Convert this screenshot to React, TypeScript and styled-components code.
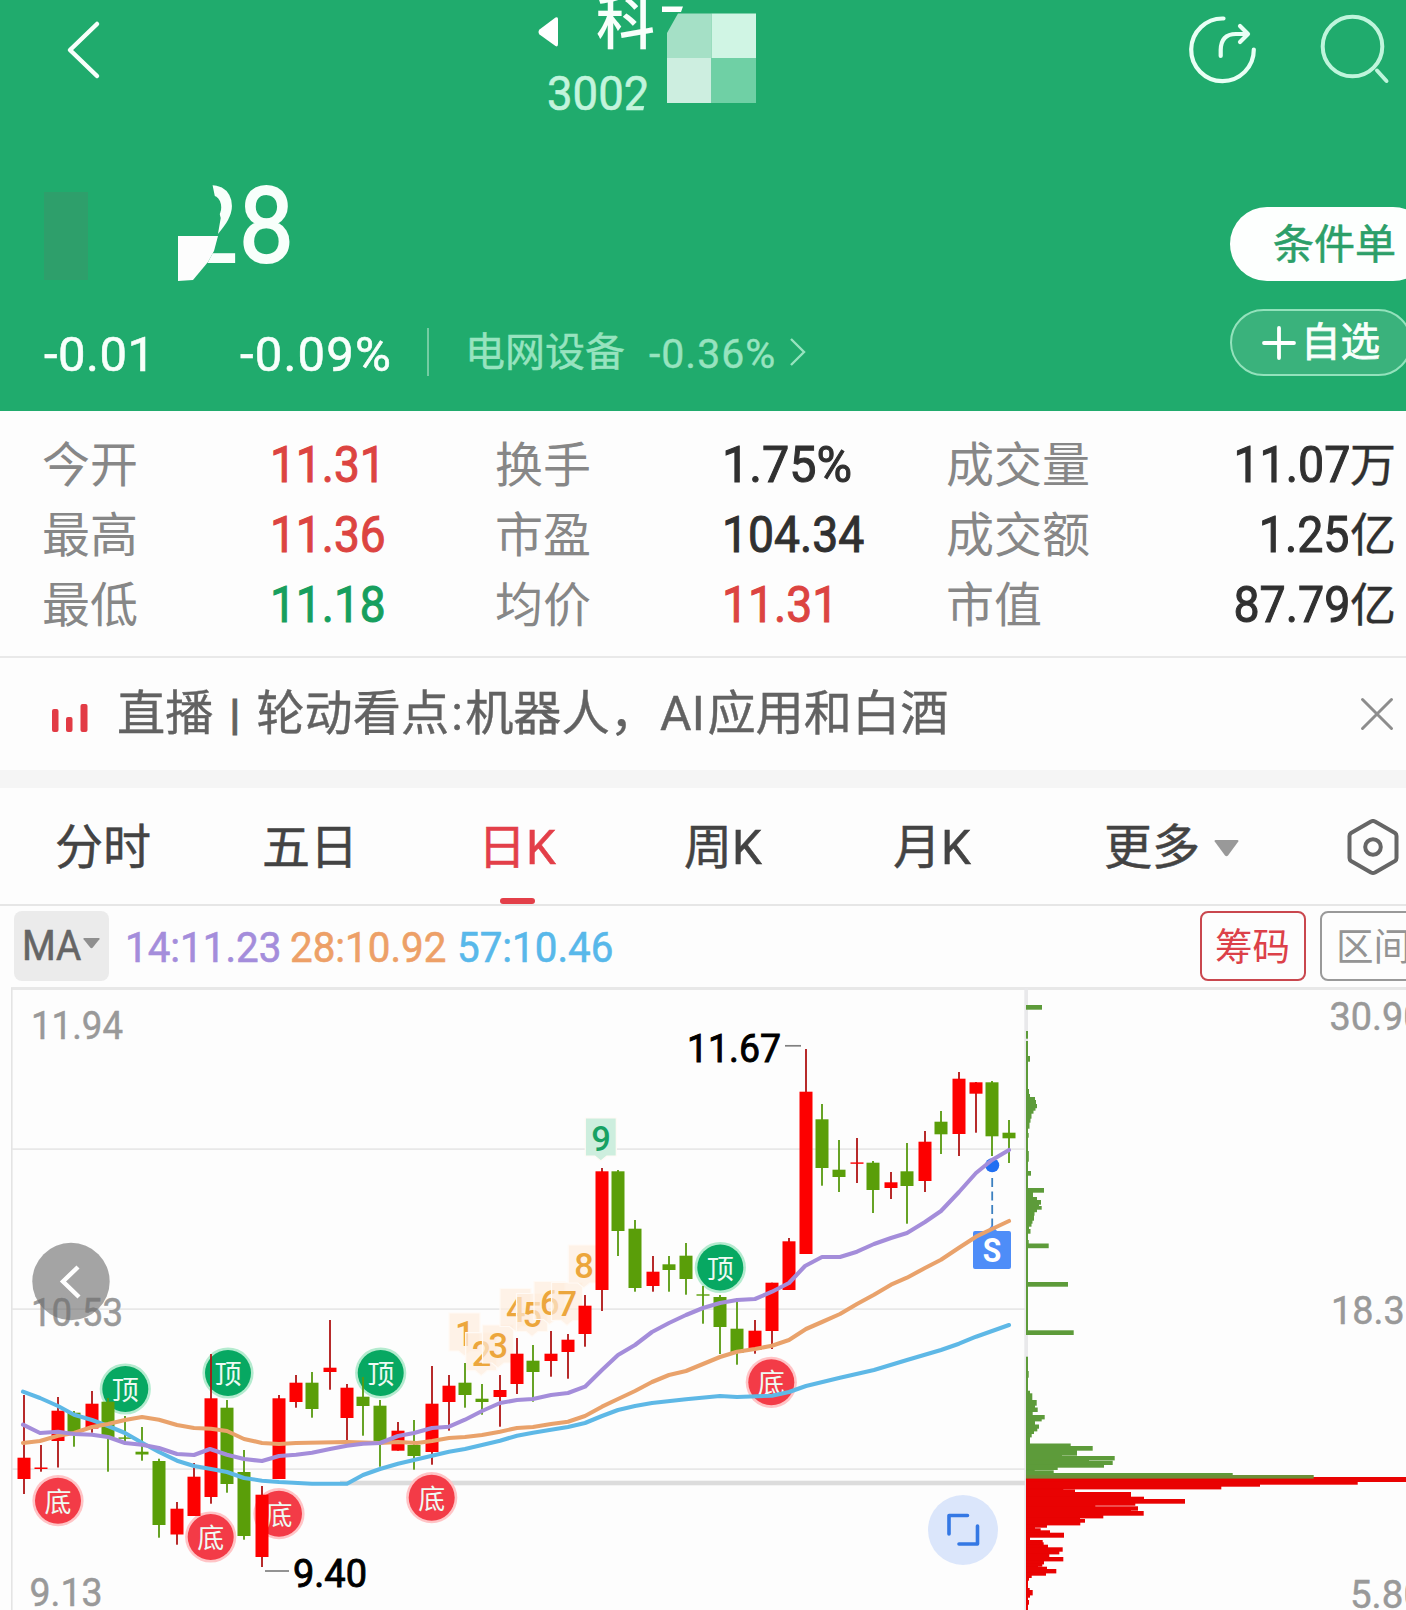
import React from "react";
import styled, { createGlobalStyle } from "styled-components";

const GlobalStyle = createGlobalStyle`
  * { box-sizing: border-box; }
  html, body { margin: 0; padding: 0; }
  body { font-family: Roboto, "Noto Sans CJK SC", sans-serif; background: #fdfdfd; overflow: hidden; }
  svg { display: block; flex: none; }
`;

const Page = styled.main`
  width: 1406px;
  height: 1610px;
  overflow: hidden;
  background: #fdfdfd;
  display: flex;
  flex-direction: column;
`;

const Figures = styled.span<{ $size: number; $stretch?: number; $origin?: string; $color?: string; $spacing?: number; $ink?: number }>`
  display: inline-block;
  font-size: ${(p) => p.$size}px;
  letter-spacing: ${(p) => p.$spacing ?? 0}px;
  color: ${(p) => p.$color ?? "inherit"};
  -webkit-text-stroke: ${(p) => p.$ink ?? 0}px currentColor;
  transform: scaleX(${(p) => p.$stretch ?? 1});
  transform-origin: ${(p) => p.$origin ?? "left"} center;
  white-space: nowrap;
`;

/* ---------- header ---------- */

const Header = styled.header`
  height: 411px;
  flex: none;
  background: #20ab6d;
  color: #f8fffb;
`;

const NavBar = styled.div`
  height: 120px;
  display: grid;
  grid-template-columns: 538px 648px 132px 1fr;
`;

const BackButton = styled.div`
  padding: 20px 0 0 66px;
`;

const TitleBlock = styled.div`
  position: relative;
  display: flex;
  flex-direction: column;
`;

const NameRow = styled.div`
  height: 66px;
  display: flex;
  align-items: flex-start;
`;

const PrevArrow = styled.svg`
  margin-top: 16px;
`;

const StockName = styled.span`
  margin-left: 37px;
  font-size: 59px;
  line-height: 48px;
  font-weight: 500;
`;

const StockCode = styled.div`
  padding-left: 9px;
  line-height: 55px;
  color: #c2f4dc;
`;

const CodeClip = styled.span`
  display: inline-block;
  clip-path: polygon(0 0, 101px 0, 101px 22px, 94px 55px, 0 55px);
`;

const Mosaic = styled.svg`
  position: absolute;
  left: 122px;
  top: 0;
`;

const NavIcon = styled.div`
  padding-top: 12px;
`;

const Quote = styled.div`
  height: 291px;
  display: grid;
  grid-template-columns: 1230px 1fr;
`;

const QuoteLeft = styled.div`
  position: relative;
  padding-top: 52px;
`;

const Price = styled.div`
  height: 108px;
  line-height: 108px;
  padding-left: 183px;
  display: flex;
  -webkit-text-stroke: 2px currentColor;
`;

const PriceDigit = styled.span<{ $cut?: boolean }>`
  display: inline-block;
  width: 56px;
  font-size: 106px;
  transform: scaleX(0.92);
  transform-origin: left center;
  clip-path: ${(p) => (p.$cut ? "polygon(31px 8px, 64px 8px, 64px 94px, 25px 94px, 33px 80px, 38px 62px, 41px 46px, 35px 26px)" : "none")};
`;

const Smudges = styled.svg`
  position: absolute;
  left: 0;
  top: 60px;
`;

const ChangeRow = styled.div`
  margin-top: 48px;
  height: 48px;
  line-height: 53px;
  display: grid;
  grid-template-columns: 196px 188px 38px 183px 140px auto;
  padding-left: 44px;
`;

const ChangeDivider = styled.i`
  width: 2px;
  height: 48px;
  margin-left: -1px;
  background: #74cca3;
`;

const Sector = styled.span`
  margin-left: -1px;
  font-size: 40px;
  line-height: 50px;
  color: #97e3bf;
  -webkit-text-stroke: 0.4px currentColor;
`;

const Actions = styled.div`
  display: flex;
  flex-direction: column;
  gap: 28px;
  padding-top: 87px;
`;

const OrderButton = styled.div`
  width: 200px;
  height: 74px;
  border-radius: 37px;
  background: #fdfffe;
  color: #2c9f69;
  font-size: 41px;
  line-height: 77px;
  padding-left: 43px;
  white-space: nowrap;
  -webkit-text-stroke: 0.6px currentColor;
`;

const WatchButton = styled.div`
  width: 182px;
  height: 67px;
  border-radius: 34px;
  border: 2px solid #93e2bc;
  background: #3ab27c;
  display: flex;
  align-items: center;
  gap: 5px;
  padding-left: 30px;
  font-size: 39.5px;
  line-height: 66px;
  -webkit-text-stroke: 0.8px currentColor;
  white-space: nowrap;
`;

/* ---------- stats ---------- */

const Stats = styled.section`
  height: 247px;
  flex: none;
  padding: 18px 10px 0 43px;
  display: grid;
  grid-template-columns: 227px 226px 226px 225px 1fr;
  grid-template-rows: repeat(3, 70px);
  border-bottom: 2px solid #e9e9e9;
  line-height: 73px;
`;

const StatLabel = styled.span`
  font-size: 48px;
  line-height: 73px;
  margin-left: -1px;
  color: #878787;
  white-space: nowrap;
`;

const StatPair = styled.div`
  display: flex;
  justify-content: space-between;
`;

const StatValue = styled.span<{ $tone?: "up" | "down"; $end?: boolean }>`
  display: flex;
  justify-content: ${(p) => (p.$end ? "flex-end" : "flex-start")};
  color: ${(p) => (p.$tone === "up" ? "#dc4441" : p.$tone === "down" ? "#179f5e" : "#303030")};
`;

const Unit = styled.span`
  font-size: 46px;
  line-height: 73px;
  -webkit-text-stroke: 0.4px currentColor;
`;

/* ---------- live strip ---------- */

const LiveStrip = styled.section`
  height: 112px;
  flex: none;
  display: flex;
  align-items: center;
  padding: 0 12px 0 52px;
`;

const LiveBars = styled.svg`
  margin-top: 8px;
`;

const LiveText = styled.span`
  margin-left: 28px;
  flex: 1;
  font-size: 48.200px;
  line-height: 116px;
  color: #626262;
  white-space: nowrap;
  -webkit-text-stroke: 0.4px currentColor;
`;

const Pipe = styled.span`
  display: inline-block;
  width: 43px;
  text-align: center;
  font-size: 42px;
  font-weight: 700;
  line-height: 40px;
  vertical-align: 1px;
  -webkit-text-stroke: 1px currentColor;
`;

const Colon = styled.span`
  display: inline-block;
  width: 16px;
  text-align: center;
`;

const Ai = styled.span`
  margin-left: 2px;
  margin-right: 2px;
  letter-spacing: 0.5px;
`;

const Band = styled.div`
  height: 18px;
  flex: none;
  background: #f5f5f5;
`;

/* ---------- tabs ---------- */

const Tabs = styled.nav`
  height: 118px;
  flex: none;
  border-bottom: 2px solid #e6e6e6;
  display: grid;
  grid-template-columns: 207px 216px 206px 209px 211px 242px 1fr;
  grid-template-rows: 116px;
  padding-left: 55px;
  color: #434343;
  font-size: 48px;
  line-height: 116px;
  -webkit-text-stroke: 0.5px currentColor;
`;

const Tab = styled.div<{ $active?: boolean }>`
  display: flex;
  align-items: center;
  padding-top: 3px;
  color: ${(p) => (p.$active ? "#e33f49" : "inherit")};
  position: relative;
  white-space: nowrap;
  &::after {
    content: "";
    display: ${(p) => (p.$active ? "block" : "none")};
    position: absolute;
    left: 22px;
    bottom: 0;
    width: 35px;
    height: 6px;
    border-radius: 3px;
    background: #e33f49;
  }
`;

const Latin = styled.span`
  display: inline-block;
  font-size: 49px;
  transform: scaleX(0.97);
  transform-origin: left center;
`;

const Caret = styled.svg`
  margin-left: 14px;
  margin-top: 2px;
`;

/* ---------- indicator bar ---------- */

const IndicatorBar = styled.div`
  height: 81px;
  flex: none;
  padding: 5px 0 6px 14px;
  display: grid;
  grid-template-columns: 111px 165px 167px 743px 120px 1fr;
  font-size: 42px;
  line-height: 74px;
`;

const MaButton = styled.div`
  width: 95px;
  height: 70px;
  border-radius: 8px;
  background: #ebebeb;
  color: #656565;
  display: flex;
  align-items: center;
  padding-left: 8px;
`;

const MaName = styled.span`
  width: 61px;
`;

const Chip = styled.div<{ $tone: string; $line: string; $width: number; $pad: number }>`
  width: ${(p) => p.$width}px;
  height: 70px;
  border: 2px solid ${(p) => p.$line};
  border-radius: 8px;
  color: ${(p) => p.$tone};
  padding-left: ${(p) => p.$pad}px;
  font-size: 37.5px;
  line-height: 69px;
  white-space: nowrap;
`;

const ChartSvg = styled.svg`
  font-family: Roboto, "Noto Sans CJK SC", sans-serif;
`;

/* ---------- chart data ---------- */

type Candle = [number, number, number, number, number, 0 | 1];

// x, high, body top, body bottom, low, rising
const candles: Candle[] = [
  [24, 1395, 1457.7, 1479, 1494, 1], [41, 1445, 1467.5, 1469, 1471.7, 1], [58, 1397, 1410.7, 1441, 1467.5, 1],
  [74, 1411, 1412.7, 1432, 1446.7, 0], [92, 1391, 1403.7, 1428.5, 1432.7, 1], [108, 1398, 1401.7, 1437, 1471.7, 0],
  [125, 1416, 1437.4, 1438.8, 1443, 0], [142, 1427, 1451.7, 1454.5, 1460.7, 0], [159, 1458.7, 1461, 1525, 1537.7, 0],
  [177, 1502, 1508.7, 1534.5, 1544.7, 1], [194, 1463, 1476.7, 1516, 1516, 1], [211, 1354, 1398.3, 1497, 1503.7, 1],
  [227, 1400, 1407.7, 1484, 1492.7, 0], [244, 1450, 1472, 1536, 1539.7, 0], [262, 1486, 1494.7, 1557, 1567, 1],
  [279, 1395, 1398.3, 1479, 1479, 1], [296, 1375, 1382.7, 1402, 1407.7, 1], [312, 1372, 1382.7, 1409, 1417.7, 0],
  [330, 1320, 1367.7, 1372, 1389.7, 1], [347, 1384, 1387.7, 1418, 1440, 1], [363, 1377, 1396.7, 1406, 1435.7, 0],
  [380, 1400, 1405.7, 1442, 1466.7, 0], [398, 1422, 1430.7, 1450.7, 1450.7, 1], [414, 1420, 1445, 1456, 1469.7, 0],
  [432, 1366, 1403.7, 1452, 1464.7, 1], [449, 1375, 1385.7, 1402, 1430.7, 1], [465, 1363, 1382.7, 1395, 1407.7, 0],
  [482, 1384, 1398.7, 1402, 1414.7, 0], [500, 1375, 1390, 1397, 1426.7, 1], [517, 1338, 1353.7, 1384, 1394, 1],
  [533, 1345, 1360.7, 1372, 1401.7, 0], [551, 1331, 1353.7, 1361, 1376.7, 1], [568, 1334, 1339.7, 1352, 1378.7, 1],
  [585, 1295, 1305.7, 1334, 1346.7, 1], [602, 1168, 1171.3, 1290, 1311, 1], [618, 1170, 1171.3, 1231, 1256, 0],
  [635, 1220, 1228.7, 1288, 1291.7, 0], [653, 1256, 1271.7, 1286, 1291.7, 1], [669, 1256, 1264.3, 1270, 1291.7, 0],
  [686, 1243, 1255.7, 1279, 1294.7, 0], [703, 1286, 1294.3, 1295.7, 1323.7, 0], [720, 1295, 1297, 1327, 1354, 0],
  [737, 1302, 1328.7, 1353, 1364.7, 0], [755, 1320, 1330.7, 1350, 1353.7, 1], [772, 1282.7, 1282.7, 1331, 1349, 1],
  [789, 1238, 1241.3, 1290, 1290, 1], [806, 1049, 1091.7, 1254, 1254, 1], [822, 1104, 1119.3, 1168, 1185.7, 0],
  [839, 1140, 1169.7, 1177, 1192, 0], [857, 1138, 1162.4, 1163.8, 1183, 1], [873, 1161, 1162.7, 1190, 1213, 0],
  [891, 1172, 1182.3, 1188, 1199, 1], [907, 1143, 1171.3, 1186, 1223.7, 0], [925, 1131, 1141.7, 1181, 1192, 1],
  [941, 1111, 1121.7, 1134.3, 1154, 0], [959, 1072, 1078.7, 1134, 1156, 1], [976, 1082, 1082.3, 1093.7, 1132.7, 1],
  [992, 1081, 1082.3, 1136.3, 1156, 0], [1009, 1120, 1132.7, 1138.3, 1163, 0],
];

const ma14 =
  "23,1424.7 40,1433 58,1431.7 74,1434 92,1434.7 108,1437 125,1443 142,1444.7 159,1448 177,1454 194,1455 210,1449 227,1454.7 244,1459 262,1461 279,1456 296,1454.7 312,1452.7 330,1449 347,1445.7 363,1443.7 380,1443 398,1436 414,1433 432,1428 449,1426.7 465,1419.7 482,1411 500,1403 517,1400 533,1399 551,1395 568,1393 585,1386.7 602,1370 618,1355 635,1345 652,1332 669,1323 686,1315 703,1308 720,1303 737,1300 755,1299 772,1291.7 789,1283 805,1266 822,1257 840,1257 857,1251.7 874,1244 891,1238 907,1233 925,1222 941,1211 959,1192 976,1173 992,1160 1009,1150";
const ma28 =
  "23,1443 40,1441 58,1435.7 74,1433 92,1427 108,1424 125,1420 142,1417 159,1419.7 177,1425 194,1428 211,1428.7 227,1431 244,1439 262,1443 279,1444 296,1443 347,1442 380,1443 398,1442 417,1443 432,1441 449,1438 465,1437 482,1435 500,1431.7 517,1428 533,1427 551,1424 568,1421.7 585,1416 602,1406.7 618,1399 635,1391 652,1382 669,1375 686,1371 703,1364 720,1357 737,1351.7 755,1349 772,1345.7 789,1340 806,1329 822,1322 840,1314 857,1304 874,1294.7 891,1284.7 907,1277.7 925,1268 941,1259.7 959,1247.7 976,1236.7 992,1229 1009,1221";
const ma57 =
  "23,1391.7 40,1398 58,1406 74,1414.7 92,1420 108,1426 125,1433 142,1442.7 159,1452 177,1460.7 194,1466 211,1469 227,1472 244,1478 262,1480.7 279,1482 312,1483.7 347,1483.7 363,1475 380,1469 398,1463.7 414,1460 432,1455.7 449,1451.7 465,1449 482,1445 500,1440.7 517,1435.7 533,1432.7 551,1429.7 568,1427 585,1423 602,1416 618,1410 635,1406 652,1403 686,1399.3 720,1396 737,1397 772,1395.7 789,1392 806,1386 840,1377.7 874,1370 907,1360 941,1350 959,1343.7 976,1336.7 1009,1325";

// top, bottom, right edge
type Bar = [number, number, number];
const chipsAbove: Bar[] = [
  [1005, 1009, 1042], [1031, 1038, 1028], [1041, 1334, 1028], [1056, 1061, 1030], [1089, 1094, 1029], [1094, 1097, 1030],
  [1097, 1100, 1035], [1100, 1104, 1036], [1104, 1107.5, 1037], [1107.5, 1110, 1035.5], [1110, 1113, 1033.5],
  [1113, 1118, 1031.5], [1118, 1122, 1030.5], [1122, 1128, 1029.5], [1133, 1137, 1028.7], [1151, 1161, 1028.8],
  [1171, 1175, 1031], [1188, 1192, 1044], [1192, 1197, 1033], [1197, 1200, 1037], [1200, 1204, 1041],
  [1204, 1206, 1039], [1206, 1209, 1041.7], [1209, 1211.5, 1037], [1211.5, 1215, 1034.5], [1215, 1220, 1034],
  [1220, 1223, 1032.5], [1223, 1226, 1031.5], [1226, 1229, 1029], [1229, 1233, 1030.5], [1240, 1244, 1028.7],
  [1243.5, 1247.5, 1048.7], [1282, 1286, 1068], [1330.3, 1334.3, 1073.7],
  [1356.7, 1480, 1028], [1371, 1377, 1028.7], [1390.7, 1393.3, 1030], [1393.3, 1400, 1032.3], [1400, 1405, 1036.7],
  [1405, 1407.5, 1035], [1407.5, 1411.3, 1037.7], [1411.3, 1415, 1032.7], [1415, 1418.7, 1044.7], [1418.7, 1420.7, 1041.7],
  [1420.7, 1424.5, 1035], [1424.5, 1428, 1039], [1428, 1430.7, 1037.3], [1430.7, 1433.3, 1034], [1433.3, 1436.7, 1031.7],
  [1436.7, 1443.5, 1030], [1443.5, 1446, 1070.7], [1446, 1450, 1092.7], [1450, 1455, 1077], [1455, 1456, 1062],
  [1456, 1459.7, 1114.7], [1459.7, 1460.7, 1089], [1460.7, 1464.3, 1112.7], [1464.3, 1467, 1104], [1467, 1469.3, 1057.7],
  [1469.3, 1470.3, 1034.7], [1470.3, 1473, 1053.7], [1473, 1475, 1232.7],
];
const chipsBelow: Bar[] = [
  [1477, 1481.3, 1406], [1481.3, 1484, 1357.7], [1484, 1486, 1260], [1486, 1488.7, 1221.3], [1488.7, 1489.4, 1063.3],
  [1489.4, 1492, 1075], [1492, 1496.7, 1131], [1496.7, 1499, 1144], [1499, 1503, 1185], [1503, 1505, 1135.3],
  [1505, 1506.3, 1095.3], [1506.3, 1510, 1138], [1510, 1511, 1131], [1511, 1515, 1143.7], [1515, 1517.7, 1103.3],
  [1517.7, 1519, 1080], [1519, 1522, 1085], [1522, 1524.7, 1080.3], [1524.7, 1527, 1047], [1527, 1528.3, 1035],
  [1528.3, 1530.3, 1040.7], [1530.3, 1532.7, 1050], [1532.7, 1537, 1064], [1537, 1540, 1030], [1540, 1542.3, 1042.7],
  [1542.3, 1544.7, 1043.7], [1544.7, 1547.3, 1048], [1547.3, 1551, 1062.7], [1551, 1553.7, 1059.3], [1553.7, 1557, 1049.3],
  [1557, 1560.7, 1063.3], [1560.7, 1563.7, 1044], [1563.7, 1566, 1042.3], [1566, 1566.7, 1038], [1566.7, 1569, 1047],
  [1569, 1572.7, 1056.3], [1572.7, 1575, 1046], [1575, 1577.3, 1031.7], [1577.3, 1580, 1029], [1580, 1610, 1028],
  [1588, 1590, 1029.7], [1590, 1594.7, 1032.7], [1594.7, 1597, 1030], [1600, 1604, 1029],
];

const badges: { x: number; y: number; kind: "顶" | "底" }[] = [
  { x: 125.3, y: 1389, kind: "顶" }, { x: 228, y: 1373, kind: "顶" }, { x: 380.7, y: 1373, kind: "顶" },
  { x: 720.3, y: 1267.5, kind: "顶" }, { x: 58, y: 1500.7, kind: "底" }, { x: 210.7, y: 1537, kind: "底" },
  { x: 279, y: 1513.7, kind: "底" }, { x: 431.7, y: 1497.7, kind: "底" }, { x: 771.3, y: 1382.3, kind: "底" },
];

const tags: [string, number, number][] = [
  ["1", 449, 1313], ["2", 465.7, 1332.7], ["3", 482.5, 1325], ["4", 500, 1288.5], ["5", 516.5, 1293.5],
  ["6", 534, 1281.5], ["7", 551.5, 1282.5], ["8", 568.3, 1245], ["9", 585.3, 1118],
];

const axisLabels: [string, number, number, number][] = [
  ["11.94", 31, 1038.8, 92], ["10.53", 31, 1326, 92], ["9.13", 29.5, 1605.8, 73],
  ["30.90", 1329.5, 1030, 95], ["18.35", 1331, 1324, 95], ["5.80", 1350, 1608, 75],
];

function Badge({ x, y, kind }: { x: number; y: number; kind: "顶" | "底" }) {
  const top = kind === "顶";
  return (
    <g>
      <circle cx={x} cy={y} r={25.6} fill={top ? "#b4ebcf" : "#ffc4c6"} />
      <circle cx={x} cy={y} r={23} fill={top ? "#07a862" : "#f33b47"} />
      <text x={x} y={y + 11} fontSize={27} textAnchor="middle" fill="#eefaf3">{kind}</text>
    </g>
  );
}

function Tag({ label, x, y }: { label: string; x: number; y: number }) {
  const nine = label === "9";
  return (
    <g>
      <path
        d={`M${x} ${y}h31v38h-9.5l-6 5-6-5h-9.5z`}
        fill={nine ? "#cdeede" : "#feecdb"}
        fillOpacity={nine ? 1 : 0.68}
        stroke="#fffaf5"
        strokeWidth={1.2}
      />
      <text x={x + 15.8} y={y + 33} fontSize={34.5} fontWeight={500} textAnchor="middle" fill={nine ? "#17a163" : "#eca63c"}>
        {label}
      </text>
    </g>
  );
}

function Chart() {
  return (
    <ChartSvg width={1406} height={623} viewBox="0 987 1406 623">
      <rect x={11} y={987} width={1395} height={3} fill="#e8e8e8" />
      <rect x={11} y={988} width={1.6} height={622} fill="#e4e4e4" />
      <rect x={1024.3} y={988} width={3.7} height={622} fill="#e9e9eb" />
      {[1148.3, 1308.3, 1468.3].map((y) => (
        <rect key={y} x={12} y={y} width={1013} height={1.6} fill="#e6e6e6" />
      ))}
      <rect x={340} y={1480.7} width={685} height={4.6} fill="#dcdcdc" />

      {axisLabels.map(([t, x, y, w]) => (
        <text key={t} x={x} y={y} fontSize={39.5} fill="#999" stroke="#999" strokeWidth={0.5} textLength={w} lengthAdjust="spacingAndGlyphs">{t}</text>
      ))}

      {badges.map((b) => <Badge key={b.x} {...b} />)}
      {tags.map(([t, x, y]) => <Tag key={t} label={t} x={x} y={y} />)}

      {candles.map(([x, hi, top, bottom, lo, up]) => (
        <g key={x}>
          <rect x={x - 0.9} y={hi} width={1.8} height={lo - hi} fill={up ? "#b01414" : "#57990f"} />
          <rect x={x - 6.5} y={top} width={13} height={bottom - top} fill={up ? "#fd0000" : "#5a9e09"} />
        </g>
      ))}

      <line x1={992.2} y1={1178} x2={992.2} y2={1226} stroke="#3c80c0" strokeWidth={1.8} strokeDasharray="9 4.500" />
      <path d="M975 1231h12l5-6 5 6h12a2 2 0 0 1 2 2v34a2 2 0 0 1-2 2h-34a2 2 0 0 1-2-2v-34a2 2 0 0 1 2-2z" fill="#4e8df8" />
      <text x={992} y={1262} fontSize={33} fontWeight={700} textAnchor="middle" fill="#fff" textLength={18.5} lengthAdjust="spacingAndGlyphs">S</text>
      <circle cx={992.2} cy={1165.3} r={7} fill="#216ff2" />

      <g fill="none" strokeWidth={4.1} strokeLinecap="round" strokeLinejoin="round">
        <polyline points={ma57} stroke="#5eb8e6" />
        <polyline points={ma28} stroke="#e9a26b" />
        <polyline points={ma14} stroke="#a48dda" />
      </g>

      <line x1={785} y1={1045.8} x2={801} y2={1045.8} stroke="#808080" strokeWidth={1.7} />
      <text x={687} y={1062.3} fontSize={39.5} fill="#000" stroke="#000" strokeWidth={0.9} textLength={94} lengthAdjust="spacingAndGlyphs">11.67</text>
      <line x1={265} y1={1571} x2={289} y2={1571} stroke="#808080" strokeWidth={1.7} />
      <text x={293} y={1587.3} fontSize={39.5} fill="#000" stroke="#000" strokeWidth={0.9} textLength={74} lengthAdjust="spacingAndGlyphs">9.40</text>

      <g fill="#5d9b3a">
        {chipsAbove.map(([t, b, r], i) => <rect key={i} x={1026} y={t} width={r - 1026} height={b - t + 0.7} />)}
      </g>
      <g fill="#e90202">
        {chipsBelow.map(([t, b, r], i) => <rect key={i} x={1026} y={t} width={r - 1026} height={b - t + 0.7} />)}
      </g>
      <rect x={1026} y={1475} width={287.7} height={3.6} fill="#6c8f38" />

      <circle cx={71} cy={1281.5} r={38.7} fill="#6e6e6e" fillOpacity={0.62} />
      <path d="M78 1267 63 1281.5 79 1297" fill="none" stroke="#fff" strokeWidth={4.4} />

      <circle cx={963} cy={1530} r={35} fill="#dbe6fb" />
      <path d="M949 1534v-18.5h18.5M977.5 1526v18h-18.5" fill="none" stroke="#3478e4" strokeWidth={3.6} strokeLinecap="round" strokeLinejoin="round" />
    </ChartSvg>
  );
}

type Tone = "up" | "down" | undefined;
const stats: [string, string, Tone, string, string, Tone, number, string, string, string][] = [
  ["今开", "11.31", "up", "换手", "1.75%", undefined, 0.98, "成交量", "11.07", "万"],
  ["最高", "11.36", "up", "市盈", "104.34", undefined, 0.935, "成交额", "1.25", "亿"],
  ["最低", "11.18", "down", "均价", "11.31", "up", 0.935, "市值", "87.79", "亿"],
];

export default function App() {
  return (
    <>
      <GlobalStyle />
      <Page>
        <Header>
          <NavBar>
            <BackButton>
              <svg width="36" height="60" viewBox="0 0 36 60" fill="none" stroke="#f8fffb" strokeWidth="4.500" strokeLinecap="round" strokeLinejoin="round">
                <path d="M31 4 4 30 31 56" />
              </svg>
            </BackButton>
            <TitleBlock>
              <NameRow>
                <PrevArrow width="21" height="32" viewBox="0 0 21 32">
                  <path d="M17.5 1.6Q20 .2 20 3V28Q20 31.400 17.500 30L1.500 18.500Q-.5 16 1.500 13.500Z" fill="#fff" />
                </PrevArrow>
                <StockName>科</StockName>
              </NameRow>
              <StockCode>
                <CodeClip>
                  <Figures $size={49} $stretch={0.93} $ink={0.6}>3002</Figures>
                </CodeClip>
              </StockCode>
              <Mosaic width="100" height="106" viewBox="0 0 100 106">
                <path d="M2 6.500H23L21 12H2Z" fill="#fff" />
                <path d="M18 13.500H51.500V58H7V33Z" fill="#a5e0c6" />
                <rect x="51.500" y="13.500" width="44.500" height="44.500" fill="#d0f5e4" />
                <rect x="7" y="58" width="44.500" height="45" fill="#cdeee0" />
                <rect x="51.500" y="58" width="44.500" height="45" fill="#6fd0a5" />
              </Mosaic>
            </TitleBlock>
            <NavIcon>
              <svg width="74" height="76" viewBox="1186 12 74 76" fill="none" stroke="#e9fff5" strokeWidth="4.200" strokeLinecap="round" strokeLinejoin="round">
                <path d="M1223.500 18.500A31.300 31.300 0 1 0 1253.800 49.500" />
                <path d="M1220.700 56V50Q1221 34 1236 34H1247.500M1240 26 1248 34 1240 42" />
              </svg>
            </NavIcon>
            <NavIcon>
              <svg width="74" height="76" viewBox="1318 12 74 76" fill="none" stroke="#bff5dc" strokeWidth="4" strokeLinecap="round">
                <circle cx="1352.500" cy="46.500" r="29.800" />
                <path d="M1377 70.500 1386.500 81" />
              </svg>
            </NavIcon>
          </NavBar>
          <Quote>
            <QuoteLeft>
              <Smudges width="240" height="110" viewBox="0 180 240 110">
                <rect x="44" y="192" width="44" height="88" fill="#2e9f6b" />
                <path d="M178 236H218L214 251 208 262 193 280 178 281Z" fill="#fdfdfd" />
              </Smudges>
              <Price>
                <PriceDigit $cut>2</PriceDigit>
                <PriceDigit>8</PriceDigit>
              </Price>
              <ChangeRow>
                <Figures $size={49} $spacing={0.5} $ink={0.6}>-0.01</Figures>
                <Figures $size={49} $spacing={1.2} $ink={0.6}>-0.09%</Figures>
                <ChangeDivider />
                <Sector>电网设备</Sector>
                <Figures $size={41} $spacing={1} $ink={0.4} $color="#97e3bf">-0.36%</Figures>
                <svg width="18" height="40" viewBox="0 0 18 40" fill="none" stroke="#97e3bf" strokeWidth="2.400">
                  <path d="M2 11 15 24 2 37" />
                </svg>
              </ChangeRow>
            </QuoteLeft>
            <Actions>
              <OrderButton>条件单</OrderButton>
              <WatchButton>
                <svg width="34" height="34" viewBox="0 0 34 34" stroke="#fff" strokeWidth="3.800" strokeLinecap="round">
                  <path d="M17 2V32M2 17H32" />
                </svg>
                自选
              </WatchButton>
            </Actions>
          </Quote>
        </Header>

        <Stats>
          {stats.map(([l1, v1, t1, l2, v2, t2, s2, l3, v3, u]) => (
            <React.Fragment key={l1}>
              <StatLabel>{l1}</StatLabel>
              <StatValue $tone={t1}><Figures $size={49.5} $stretch={0.93} $ink={1}>{v1}</Figures></StatValue>
              <StatLabel>{l2}</StatLabel>
              <StatValue $tone={t2}><Figures $size={49.5} $stretch={s2} $ink={1}>{v2}</Figures></StatValue>
              <StatPair>
                <StatLabel>{l3}</StatLabel>
                <StatValue $end><Figures $size={49.5} $stretch={0.94} $ink={1} $origin="right">{v3}</Figures><Unit>{u}</Unit></StatValue>
              </StatPair>
            </React.Fragment>
          ))}
        </Stats>

        <LiveStrip>
          <LiveBars width="37" height="28" viewBox="0 0 37 28" fill="#e23b45">
            <rect x="0" y="5" width="6.500" height="23" rx="2" />
            <rect x="14" y="13" width="6.500" height="15" rx="2" />
            <rect x="28.500" y="0" width="7" height="28" rx="2" />
          </LiveBars>
          <LiveText>直播<Pipe>|</Pipe>轮动看点<Colon>:</Colon>机器人，<Ai>AI</Ai>应用和白酒</LiveText>
          <svg width="34" height="34" viewBox="0 0 34 34" stroke="#8d8d8d" strokeWidth="3" strokeLinecap="round">
            <path d="M2.500 2.500 31.500 31.500M31.500 2.500 2.500 31.500" />
          </svg>
        </LiveStrip>
        <Band />

        <Tabs>
          <Tab>分时</Tab>
          <Tab>五日</Tab>
          <Tab $active>日<Latin>K</Latin></Tab>
          <Tab>周<Latin>K</Latin></Tab>
          <Tab>月<Latin>K</Latin></Tab>
          <Tab>
            更多
            <Caret width="25" height="17" viewBox="0 0 25 17"><path d="M1.500 0h22q1.500 0 .8 1.500L14 15.500q-1.500 1.500-3 0L.7 1.500Q0 0 1.500 0z" fill="#999" /></Caret>
          </Tab>
          <Tab>
            <svg width="54" height="58" viewBox="0 0 54 58" fill="none" stroke="#666" strokeWidth="4" strokeLinejoin="round">
              <path d="M25 2.500Q27 1.500 29 2.500L49 14Q50.500 15 50.500 17V39Q50.500 41 49 42L29 53.500Q27 54.500 25 53.500L5 42Q3.500 41 3.500 39V17Q3.500 15 5 14Z" />
              <circle cx="27" cy="28" r="7.800" />
            </svg>
          </Tab>
        </Tabs>

        <IndicatorBar>
          <MaButton>
            <MaName><Figures $size={42} $stretch={0.92} $ink={0.6}>MA</Figures></MaName>
            <svg width="17" height="16" viewBox="0 0 17 16"><path d="M1 0h15q1 0 .4 1.200L9.800 9.500q-1.300 1.300-2.600 0L.6 1.200Q0 0 1 0z" fill="#8f8f8f" /></svg>
          </MaButton>
          <Figures $size={42} $stretch={0.96} $ink={0.6} $color="#a48ddb">14:11.23</Figures>
          <Figures $size={42} $stretch={0.96} $ink={0.6} $color="#eda067">28:10.92</Figures>
          <Figures $size={42} $stretch={0.96} $ink={0.6} $color="#58b8ea">57:10.46</Figures>
          <Chip $tone="#dc4149" $line="#c9474e" $width={106} $pad={13}>筹码</Chip>
          <Chip $tone="#949494" $line="#999" $width={106} $pad={14}>区间</Chip>
        </IndicatorBar>
        <Chart />
      </Page>
    </>
  );
}
